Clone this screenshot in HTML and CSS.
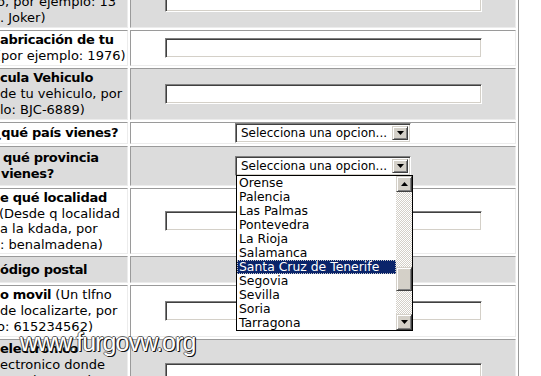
FILE: index.html
```html
<!DOCTYPE html>
<html lang="es">
<head>
<meta charset="utf-8">
<title>Formulario</title>
<link rel="stylesheet" href="styles.css">
</head>
<body>
<table class="form">
  <tr class="g">
    <td class="lbl"><b class="ln">Modelo de tu furgo</b><span class="ln s3">o, por ejemplo: 13</span><span class="ln">. Joker)</span></td>
    <td class="fld"><input type="text" class="txt"></td>
  </tr>
  <tr>
    <td class="lbl"><b class="ln">abricación de tu</b><span class="ln s4">(por ejemplo: 1976)</span></td>
    <td class="fld"><input type="text" class="txt"></td>
  </tr>
  <tr class="g">
    <td class="lbl"><b class="ln">cula Vehiculo</b><span class="ln">de tu vehiculo, por</span><span class="ln">lo: BJC-6889)</span></td>
    <td class="fld"><input type="text" class="txt"></td>
  </tr>
  <tr>
    <td class="lbl"><b class="ln s6">¿qué país vienes?</b></td>
    <td class="fld tight"><div class="sel"><span class="sel-txt">Selecciona una opcion...</span><span class="btn"><svg width="7" height="4" viewBox="0 0 7 4"><path d="M0 0H7L3.5 4Z"/></svg></span></div></td>
  </tr>
  <tr class="g">
    <td class="lbl pad3"><b class="ln p3">qué provincia</b><b class="ln p1">vienes?</b></td>
    <td class="fld tight">
      <div class="sel"><span class="sel-txt">Selecciona una opcion...</span><span class="btn"><svg width="7" height="4" viewBox="0 0 7 4"><path d="M0 0H7L3.5 4Z"/></svg></span>
        <div class="list">
          <div class="opts">
            <div class="opt">Orense</div>
            <div class="opt">Palencia</div>
            <div class="opt">Las Palmas</div>
            <div class="opt">Pontevedra</div>
            <div class="opt">La Rioja</div>
            <div class="opt">Salamanca</div>
            <div class="opt on">Santa Cruz de Tenerife</div>
            <div class="opt">Segovia</div>
            <div class="opt">Sevilla</div>
            <div class="opt">Soria</div>
            <div class="opt">Tarragona</div>
          </div>
          <div class="sb">
            <span class="btn sb-btn"><svg width="7" height="4" viewBox="0 0 7 4"><path d="M0 4H7L3.5 0Z"/></svg></span>
            <span class="sb-gap"></span>
            <span class="btn sb-thumb"></span>
            <span class="sb-rest"></span>
            <span class="btn sb-btn"><svg width="7" height="4" viewBox="0 0 7 4"><path d="M0 0H7L3.5 4Z"/></svg></span>
          </div>
        </div>
      </div>
    </td>
  </tr>
  <tr>
    <td class="lbl l155"><b class="ln">e qué localidad</b><span class="ln s1">(Desde q localidad</span><span class="ln">a la kdada, por</span><span class="ln">: benalmadena)</span></td>
    <td class="fld"><input type="text" class="txt"></td>
  </tr>
  <tr class="g">
    <td class="lbl pad5"><b class="ln">ódigo postal</b></td>
    <td class="fld"></td>
  </tr>
  <tr>
    <td class="lbl"><span class="ln"><b>o movil</b> (Un tlfno</span><span class="ln">de localizarte, por</span><span class="ln s3">o: 615234562)</span></td>
    <td class="fld"><input type="text" class="txt"></td>
  </tr>
  <tr class="g">
    <td class="lbl"><b class="ln">electronico</b><span class="ln">ectronico donde</span><span class="ln">te avisemos de</span><span class="ln">la kdada)</span></td>
    <td class="fld"><input type="text" class="txt"></td>
  </tr>
</table>
<div class="wm">www.furgovw.org</div>
</body>
</html>
```
FILE: styles.css
```css
html, body {
  margin: 0;
  padding: 0;
  background: #fff;
  overflow: hidden;
}
body {
  position: relative;
  width: 541px;
  height: 376px;
  font-family: "DejaVu Sans", Verdana, sans-serif;
  font-size: 13px;
  color: #000;
}
.form {
  table-layout: fixed;
  width: 529px;
  border-collapse: separate;
  border-spacing: 2px;
  border: 1px solid;
  border-color: #e8e8e8 #9a9a9a #9a9a9a #e8e8e8;
  margin: -27px 0 0 -10px;
}
.form td {
  border: 1px solid;
  border-color: #9a9a9a #ececec #ececec #9a9a9a;
  line-height: 16px;
  vertical-align: middle;
}
.form tr.g td {
  background: #dcdcdc;
}
.lbl {
  width: 127px;
  padding: 1px 0 1px 6px;
  text-align: left;
}
.lbl b { letter-spacing: -0.3px; }
.lbl.pad3 { padding-top: 3px; padding-bottom: 3px; }
.lbl.pad5 { padding-top: 5px; padding-bottom: 4px; }
.lbl.l155 { line-height: 15.5px; }
.ln {
  display: block;
  white-space: nowrap;
}
.s1 { margin-left: -1px; }
.s3 { margin-left: -3px; }
.s4 { margin-left: -4px; }
.s6 { margin-left: -6px; }
.p1 { margin-left: 1px; }
.p3 { margin-left: 3px; }
.fld {
  width: 382px;
  padding: 1px;
  text-align: center;
}
.fld.tight { padding: 0 1px; }
.txt {
  display: block;
  box-sizing: border-box;
  width: 317px;
  height: 20px;
  margin: 0 auto;
  padding: 0;
  border: 1px solid;
  border-color: #808080 #fff #fff #808080;
  box-shadow: inset 1px 1px 0 #404040, inset -1px -1px 0 #d4d0c8;
  background: #fff;
  outline: none;
}
.sel {
  position: relative;
  box-sizing: border-box;
  width: 176px;
  height: 20px;
  margin: 0 auto;
  padding: 2px;
  display: flex;
  align-items: stretch;
  background: #fff;
  border: 1px solid;
  border-color: #808080 #fff #fff #808080;
  box-shadow: inset 1px 1px 0 #404040, inset -1px -1px 0 #d4d0c8;
  font-size: 12px;
  line-height: 14px;
  text-align: left;
}
.sel-txt {
  flex: 1;
  padding-left: 3px;
  white-space: nowrap;
  overflow: hidden;
}
.btn {
  box-sizing: border-box;
  width: 16px;
  display: flex;
  align-items: center;
  justify-content: center;
  background: #d4d0c8;
  border: 1px solid;
  border-color: #d4d0c8 #404040 #404040 #d4d0c8;
  box-shadow: inset 1px 1px 0 #fff, inset -1px -1px 0 #808080;
}
.btn svg { display: block; fill: #000; }
.list {
  position: absolute;
  top: 100%;
  left: 0;
  z-index: 5;
  box-sizing: border-box;
  width: 177px;
  height: 156px;
  display: flex;
  border: 1px solid #000;
  background: #fff;
}
.opts {
  flex: 1;
  padding-top: 0;
}
.opt {
  height: 14px;
  line-height: 14px;
  padding-left: 2px;
  font-size: 12.4px;
  white-space: nowrap;
}
.opt.on {
  background: #0a246a;
  color: #fff;
  outline: 1px dotted #c8c8c8;
  outline-offset: -1px;
}
.sb {
  width: 16px;
  display: flex;
  flex-direction: column;
  background-color: #fff;
  background-image: repeating-conic-gradient(#d4d0c8 0 25%, #fff 0 50%);
  background-size: 2px 2px;
}
.sb-btn { height: 16px; flex: none; }
.sb-gap { height: 75px; flex: none; }
.sb-thumb { height: 24px; flex: none; }
.sb-rest { flex: 1; }
.wm {
  position: absolute;
  left: 20px;
  top: 328px;
  font-family: "Liberation Sans", Arial, sans-serif;
  font-size: 25px;
  letter-spacing: -0.9px;
  color: #fff;
  text-shadow: 1px 1px 0 #111, -1px 0 0 #666, 0 -1px 0 #666, 1px 0 0 #333;
  white-space: nowrap;
}
```
